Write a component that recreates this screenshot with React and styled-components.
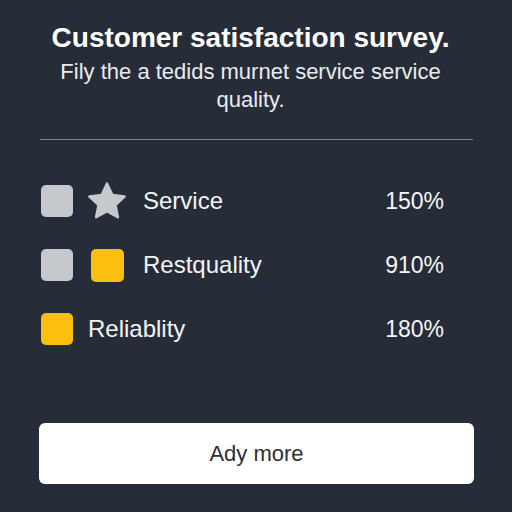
import React from "react";
import styled, { createGlobalStyle } from "styled-components";

const GlobalStyle = createGlobalStyle`
  html, body {
    margin: 0;
    padding: 0;
    background: #262d38;
  }
  body {
    font-family: "Liberation Sans", Arial, sans-serif;
    color: #f3f4f6;
  }
`;

const Page = styled.div`
  width: 512px;
  height: 512px;
  box-sizing: border-box;
  padding: 21px 38px 0 39px;
  display: flex;
  flex-direction: column;
`;

const Header = styled.header`
  padding-right: 12px;
  text-align: center;
`;

const Title = styled.h1`
  margin: 0;
  font-size: 28px;
  line-height: 34px;
  font-weight: 700;
  color: #ffffff;
`;

const Subtitle = styled.p`
  margin: 3px 0 0;
  font-size: 22px;
  line-height: 28px;
  color: #e9ebef;
`;

const Divider = styled.hr`
  margin: 25px 1px 0;
  border: 0;
  height: 1px;
  background: #7f858e;
`;

const List = styled.ul`
  list-style: none;
  margin: 45px 0 0;
  padding: 0 30px 0 2px;
  display: flex;
  flex-direction: column;
  gap: 32px;
`;

const Row = styled.li`
  display: flex;
  align-items: center;
  height: 32px;
  gap: 15px;
`;

const Square = styled.span`
  width: ${({ size }) => size || 32}px;
  height: ${({ size }) => size || 32}px;
  border-radius: 5px;
  flex-shrink: 0;
  background: ${({ tone }) => (tone === "yellow" ? "#fbbf10" : "#c5c8cd")};
`;

const Slot = styled.span`
  width: 38px;
  margin-right: 2px;
  display: flex;
  justify-content: center;
  align-items: center;
  flex-shrink: 0;
`;

const Label = styled.span`
  flex: 1;
  font-size: 24px;
  color: #f3f4f6;
`;

const Value = styled.span`
  font-size: 23px;
  color: #f5f6f8;
`;

const Button = styled.button`
  margin-top: 78px;
  height: 61px;
  padding-right: 6px;
  border: 0;
  border-radius: 6px;
  background: #ffffff;
  font-family: "Liberation Sans", Arial, sans-serif;
  font-size: 22px;
  color: #2e2f33;
  cursor: pointer;
`;

const Star = () => (
  <svg width="38" height="38" viewBox="2 2 20 20">
    <path
      d="M12 2.9l2.8 6 6.4.8-4.8 4.4 1.3 6.4L12 17.3l-5.7 3.2 1.3-6.4-4.8-4.4 6.4-.8z"
      fill="#c5c8cd"
      stroke="#c5c8cd"
      strokeWidth="1.4"
      strokeLinejoin="round"
    />
  </svg>
);

const items = [
  { label: "Service", value: "150%", first: "gray", second: "star" },
  { label: "Restquality", value: "910%", first: "gray", second: "yellow" },
  { label: "Reliablity", value: "180%", first: "yellow" },
];

export default function App() {
  return (
    <>
      <GlobalStyle />
      <Page>
        <Header>
          <Title>Customer satisfaction survey.</Title>
          <Subtitle>Fily the a tedids murnet service service quality.</Subtitle>
        </Header>
        <Divider />
        <List>
          {items.map((item) => (
            <Row key={item.label}>
              <Square tone={item.first} />
              {item.second && (
                <Slot>
                  {item.second === "star" ? <Star /> : <Square tone="yellow" size={33} />}
                </Slot>
              )}
              <Label>{item.label}</Label>
              <Value>{item.value}</Value>
            </Row>
          ))}
        </List>
        <Button>Ady more</Button>
      </Page>
    </>
  );
}
